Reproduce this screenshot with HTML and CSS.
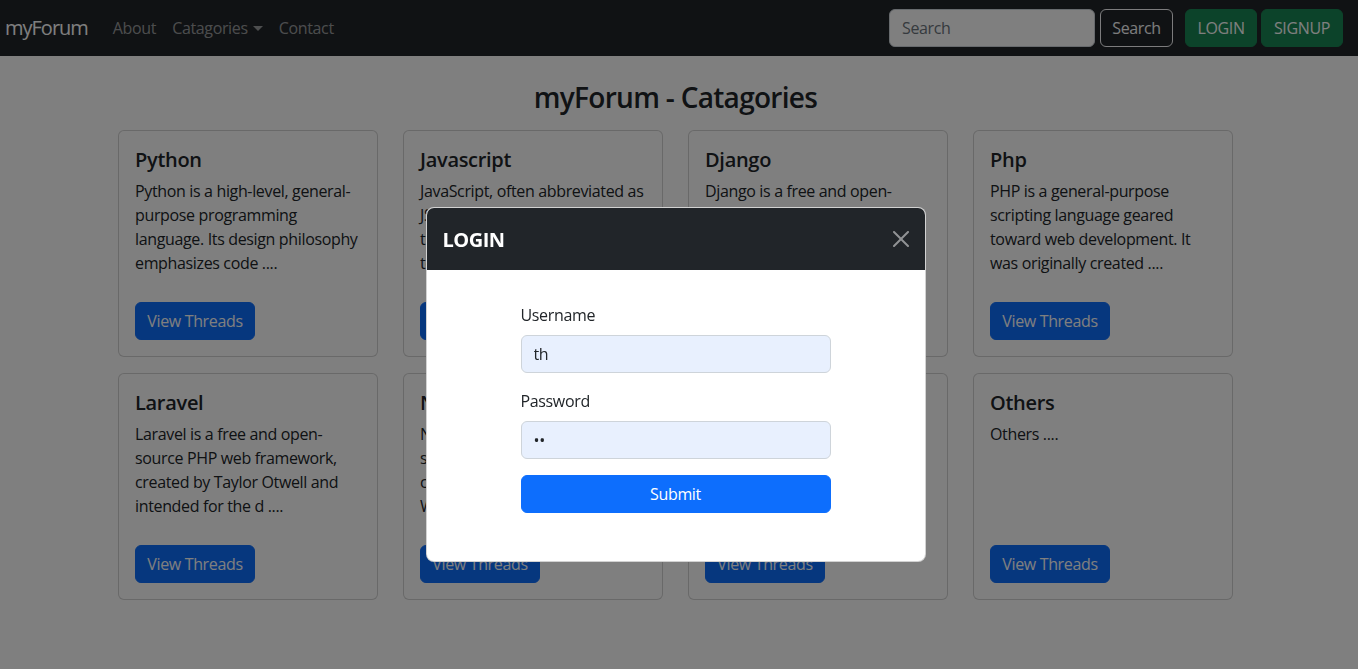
FILE: index.html
```html
<!DOCTYPE html>
<html lang="en">
<head>
<meta charset="utf-8">
<title>myForum - Catagories</title>
<link rel="stylesheet" href="styles.css">
</head>
<body>
<nav class="navbar">
  <a class="brand" href="#">myForum</a>
  <ul class="nav">
    <li><a class="nav-link" href="#">About</a></li>
    <li><a class="nav-link dropdown-toggle" href="#">Catagories</a></li>
    <li><a class="nav-link" href="#">Contact</a></li>
  </ul>
  <div class="nav-right">
    <form class="search">
      <input class="search-input" type="search" placeholder="Search">
      <button class="btn btn-outline-light btn-search" type="button">Search</button>
    </form>
    <button class="btn btn-success btn-login" type="button">LOGIN</button>
    <button class="btn btn-success btn-signup" type="button">SIGNUP</button>
  </div>
</nav>

<main class="container">
  <h2 class="page-title">myForum - Catagories</h2>
  <div class="cards">
    <div class="card">
      <h5 class="card-title">Python</h5>
      <p class="card-text">Python is a high-level, general-purpose programming language. Its design philosophy emphasizes code ....</p>
      <a class="btn btn-primary" href="#">View Threads</a>
    </div>
    <div class="card">
      <h5 class="card-title">Javascript</h5>
      <p class="card-text">JavaScript, often abbreviated as JS, is a programming language that is one of the core technologies ....</p>
      <a class="btn btn-primary" href="#">View Threads</a>
    </div>
    <div class="card">
      <h5 class="card-title">Django</h5>
      <p class="card-text">Django is a free and open-source, Python-based web framework that follows the model ....</p>
      <a class="btn btn-primary" href="#">View Threads</a>
    </div>
    <div class="card">
      <h5 class="card-title">Php</h5>
      <p class="card-text">PHP is a general-purpose scripting language geared toward web development. It was originally created ....</p>
      <a class="btn btn-primary" href="#">View Threads</a>
    </div>
    <div class="card">
      <h5 class="card-title">Laravel</h5>
      <p class="card-text">Laravel is a free and open-source PHP web framework, created by Taylor Otwell and intended for the d ....</p>
      <a class="btn btn-primary" href="#">View Threads</a>
    </div>
    <div class="card">
      <h5 class="card-title">NodeJs</h5>
      <p class="card-text">Node.js is an open-source and server-side, JavaScript runtime cross-platform environment for Windows and Linux ....</p>
      <a class="btn btn-primary" href="#">View Threads</a>
    </div>
    <div class="card">
      <h5 class="card-title">ReactJs</h5>
      <p class="card-text">React is a free, open-source front-end JavaScript library for building user interfaces ....</p>
      <a class="btn btn-primary" href="#">View Threads</a>
    </div>
    <div class="card">
      <h5 class="card-title">Others</h5>
      <p class="card-text">Others ....</p>
      <a class="btn btn-primary" href="#">View Threads</a>
    </div>
  </div>
</main>

<div class="modal-backdrop"></div>

<div class="modal">
  <div class="modal-content">
    <div class="modal-header">
      <h5 class="modal-title">LOGIN</h5>
      <button class="btn-close" type="button" aria-label="Close">
        <svg viewBox="0 0 16 16" width="16" height="16"><path d="M.293.293a1 1 0 0 1 1.414 0L8 6.586 14.293.293a1 1 0 1 1 1.414 1.414L9.414 8l6.293 6.293a1 1 0 0 1-1.414 1.414L8 9.414l-6.293 6.293a1 1 0 0 1-1.414-1.414L6.586 8 .293 1.707a1 1 0 0 1 0-1.414z"/></svg>
      </button>
    </div>
    <div class="modal-body">
      <form class="login-form">
        <label class="form-label" for="username">Username</label>
        <input class="form-control" id="username" type="text" value="th">
        <label class="form-label" for="password">Password</label>
        <input class="form-control" id="password" type="password" value="th">
        <button class="btn btn-submit" type="button">Submit</button>
      </form>
    </div>
  </div>
</div>
</body>
</html>
```

FILE: styles.css
```css
* { box-sizing: border-box; }

html, body { height: 100%; }

body {
  margin: 0;
  padding-right: 7px;
  font-family: "Open Sans", "Noto Sans", sans-serif;
  font-size: 16px;
  line-height: 24px;
  letter-spacing: -0.35px;
  color: #212529;
  background: #fff;
}

a { text-decoration: none; }

/* ---------- navbar ---------- */
.navbar {
  height: 56px;
  margin-right: -7px;
  background: #212529;
  display: flex;
  align-items: center;
  padding: 0 15px 0 5px;
}

.brand {
  color: #fff;
  font-size: 20px;
  line-height: 30px;
  letter-spacing: -1px;
  margin-right: 17px;
}

.nav {
  display: flex;
  list-style: none;
  margin: 0;
  padding: 0;
}

.nav-link {
  display: flex;
  align-items: center;
  padding: 8px;
  color: rgba(255, 255, 255, 0.55);
}

.dropdown-toggle::after {
  content: "";
  margin-left: 5px;
  border-top: 5px solid;
  border-left: 5px solid transparent;
  border-right: 5px solid transparent;
}

.nav-right {
  margin-left: auto;
  display: flex;
  align-items: center;
  gap: 4px;
}

.search {
  display: flex;
  gap: 5px;
  margin-right: 8px;
}

.search-input {
  width: 206px;
  height: 38px;
  padding: 6px 12px;
  font: inherit;
  letter-spacing: inherit;
  border: 1px solid #ced4da;
  border-radius: 6px;
  background: #fff;
  color: #212529;
}

.search-input::placeholder { color: #6c757d; }

.btn {
  display: inline-flex;
  align-items: center;
  justify-content: center;
  height: 38px;
  padding: 0 12px;
  font: inherit;
  letter-spacing: inherit;
  white-space: nowrap;
  border: 1px solid transparent;
  border-radius: 6px;
  cursor: pointer;
}

.btn-outline-light {
  background: transparent;
  color: #f8f9fa;
  border-color: #f8f9fa;
}

.btn-search { width: 73px; }

.btn-success {
  background: #198754;
  border-color: #198754;
  color: #fff;
}

.btn-login { width: 72px; }
.btn-signup { width: 82px; }

/* ---------- content ---------- */
.container {
  width: 1115px;
  margin: 0 auto;
}

.page-title {
  margin: 24px 0 16px;
  text-align: center;
  font-size: 28px;
  line-height: 34px;
  font-weight: 600;
  letter-spacing: -0.7px;
}

.cards {
  display: grid;
  grid-template-columns: repeat(4, 260px);
  column-gap: 25px;
  row-gap: 16px;
}

.card {
  display: flex;
  flex-direction: column;
  align-items: flex-start;
  padding: 16px;
  border: 1px solid rgba(0, 0, 0, 0.175);
  border-radius: 6px;
  background: #fff;
}

.card-title {
  margin: 1px 0 7px;
  font-size: 20px;
  line-height: 24px;
  font-weight: 600;
  letter-spacing: -0.3px;
}

.card-text {
  margin: 0 0 27px;
  line-height: 24px;
}

.btn-primary {
  margin-top: auto;
  width: 120px;
  background: #0d6efd;
  border-color: #0d6efd;
  color: #fff;
}

/* ---------- modal ---------- */
.modal-backdrop {
  position: fixed;
  inset: 0;
  background: rgba(0, 0, 0, 0.5);
}

.modal {
  position: fixed;
  inset: 0;
  display: flex;
  justify-content: center;
  align-items: flex-start;
  padding: 207px 7px 0 0;
}

.modal-content {
  width: 500px;
  background: #fff;
  border: 1px solid rgba(0, 0, 0, 0.175);
  border-radius: 8px;
  overflow: hidden;
}

.modal-header {
  height: 62px;
  display: flex;
  align-items: center;
  justify-content: space-between;
  padding: 0 16px;
  background: #212529;
}

.modal-title {
  margin: 1px 0 0;
  color: #fff;
  font-size: 20px;
  font-weight: 700;
  letter-spacing: -0.5px;
}

.btn-close {
  width: 32px;
  height: 32px;
  padding: 8px;
  margin-right: -8px;
  border: 0;
  background: transparent;
  display: flex;
  align-items: center;
  justify-content: center;
}

.btn-close svg {
  display: block;
  fill: #fff;
  opacity: 0.5;
}

.modal-body {
  padding: 16px 16px 48px;
}

.login-form {
  width: 310px;
  margin: 17px auto 0;
  display: flex;
  flex-direction: column;
}

.form-label {
  margin-bottom: 8px;
  line-height: 24px;
}

.form-control {
  height: 38px;
  margin-bottom: 16px;
  padding: 6px 12px;
  font: inherit;
  letter-spacing: inherit;
  color: #212529;
  background: #e8f0fe;
  border: 1px solid #ced4da;
  border-radius: 6px;
}

.btn-submit {
  width: 100%;
  background: #0d6efd;
  border-color: #0d6efd;
  color: #fff;
}
```
